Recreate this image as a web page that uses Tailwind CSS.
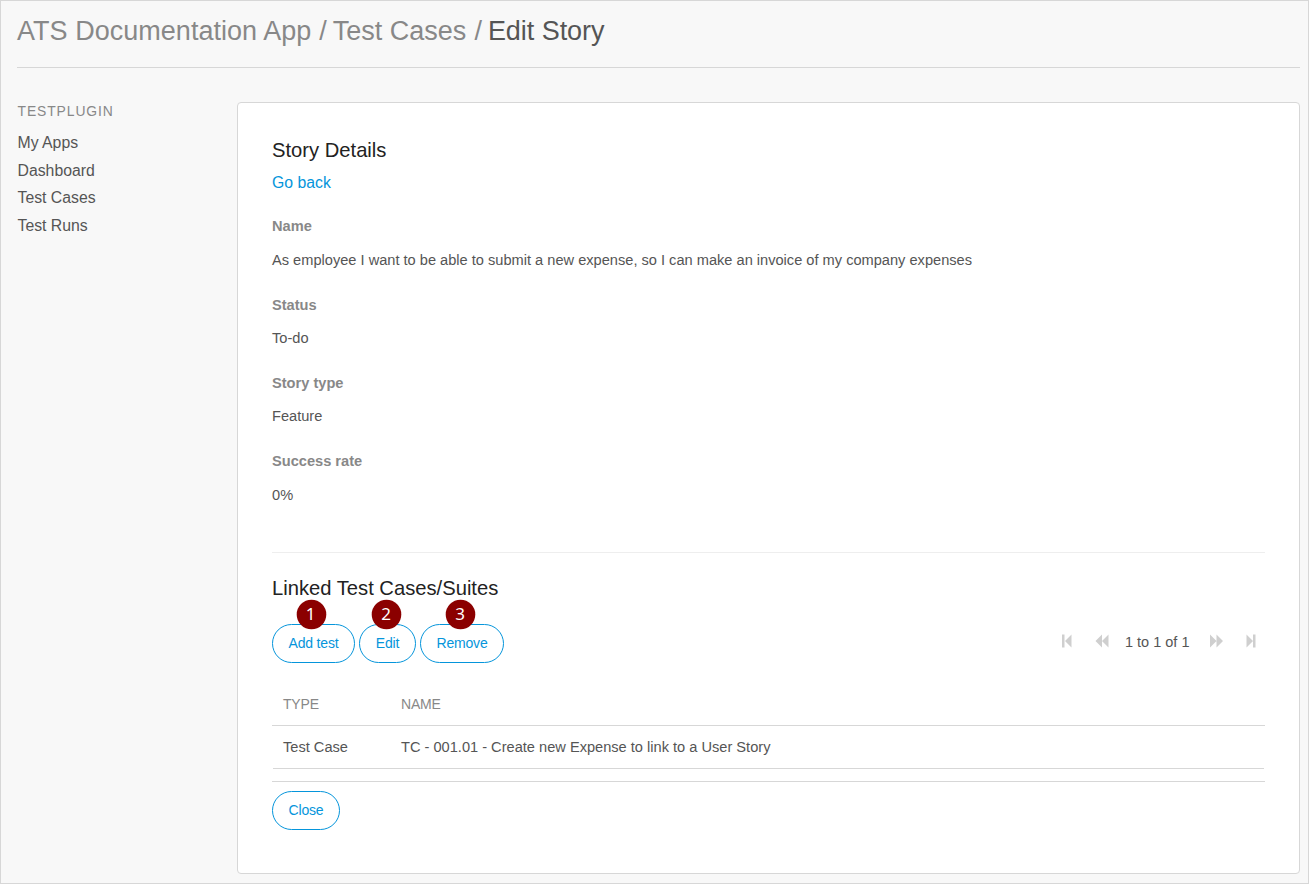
<!DOCTYPE html>
<html lang="en">
<head>
<meta charset="utf-8">
<title>Edit Story</title>
<script src="https://cdn.jsdelivr.net/npm/@tailwindcss/browser@4"></script>
</head>
<body class="w-[1309px] h-[884px] overflow-hidden border border-[#d7d7d7] bg-[#f8f8f8] font-['Liberation_Sans',Arial,sans-serif] text-[14.61px] text-[#555] whitespace-nowrap">
<header class="ml-4 mr-2 h-[67px] border-b border-[#d7d7d7] pt-[10px] flex items-start text-[27px] leading-10 text-[#888]">
  <span class="tracking-[0.03px]">ATS Documentation App</span><span class="ml-[8px]">/</span><span class="ml-[6px]">Test Cases</span><span class="ml-[8px]">/</span><span class="ml-[6px] tracking-[-0.05px] text-[#555]">Edit Story</span>
</header>
<div class="flex pt-[34px] pl-4">
  <nav class="w-[220px] pl-[0.5px] text-[15.8px] leading-[27.6px]">
    <h3 class="h-[27px] text-[13.9px] leading-[19px] tracking-[0.9px] text-[#888]">TESTPLUGIN</h3>
    <ul>
      <li>My Apps</li>
      <li>Dashboard</li>
      <li>Test Cases</li>
      <li>Test Runs</li>
    </ul>
  </nav>
  <main class="w-[1063px] h-[772px] rounded border border-[#d7d7d7] bg-white px-[34px] pt-[33px] leading-5">
    <h2 class="h-7 text-[20.2px] leading-7 text-[#222]">Story Details</h2>
    <a class="mt-[7px] block h-6 text-[15.8px] leading-6 text-[#0595db]">Go back</a>
    <div class="mt-[21px] font-bold text-[#888]">Name</div>
    <div class="mt-[14px]">As employee I want to be able to submit a new expense, so I can make an invoice of my company expenses</div>
    <div class="mt-[25px] font-bold text-[#888]">Status</div>
    <div class="mt-[13px]">To-do</div>
    <div class="mt-[25px] font-bold text-[#888]">Story type</div>
    <div class="mt-[13px]">Feature</div>
    <div class="mt-[25px] font-bold text-[#888]">Success rate</div>
    <div class="mt-[14px]">0%</div>
    <hr class="mt-[47px] border-t border-[#eee]">
    <h2 class="mt-[21px] h-7 text-[20.2px] leading-7 text-[#222]">Linked Test Cases/Suites</h2>
    <div class="mt-[22px] flex h-[39px] items-center">
      <div class="flex gap-1 text-sm tracking-[-0.2px] text-[#0595db]">
        <div class="relative flex h-[39px] w-[83px] items-center justify-center rounded-full border border-[#0595db] pb-0.5">Add test
          <svg class="absolute left-[23px] -top-[26px]" width="31" height="31"><circle cx="15.5" cy="15.5" r="14.800" fill="#8b0000"/><text x="14.500" y="20.500" text-anchor="middle" font-family="Noto Sans, sans-serif" font-size="17" fill="#fff">1</text></svg>
        </div>
        <div class="relative flex h-[39px] w-[57px] items-center justify-center rounded-full border border-[#0595db] pb-0.5">Edit
          <svg class="absolute left-[11px] -top-[26px]" width="31" height="31"><circle cx="15.5" cy="15.5" r="14.800" fill="#8b0000"/><text x="15" y="20.500" text-anchor="middle" font-family="Noto Sans, sans-serif" font-size="17" fill="#fff">2</text></svg>
        </div>
        <div class="relative flex h-[39px] w-[84px] items-center justify-center rounded-full border border-[#0595db] pb-0.5">Remove
          <svg class="absolute left-[24px] -top-[26px]" width="31" height="31"><circle cx="15.5" cy="15.5" r="14.800" fill="#8b0000"/><text x="15" y="20.500" text-anchor="middle" font-family="Noto Sans, sans-serif" font-size="17" fill="#fff">3</text></svg>
        </div>
      </div>
      <div class="ml-auto mr-2 flex w-[195px] items-center fill-[#cfcfcf] pb-1.5">
        <svg width="10" height="14"><path d="M0 0.500h2.500v13H0zM9.500 0.500v13L3 7z"/></svg>
        <svg class="ml-[23px]" width="14" height="14"><path d="M7 0.500v13L0.500 7zM13.500 0.500v13L7 7z"/></svg>
        <span class="ml-4 w-[65px] translate-y-px text-[14.5px]">1 to 1 of 1</span>
        <svg class="ml-[19px]" width="14" height="14"><path d="M1 0.500v13L7.500 7zM7.500 0.500v13L14 7z"/></svg>
        <svg class="ml-[23px]" width="10" height="14"><path d="M7 0.500h2.500v13h-2.500zM0.500 0.500v13L7 7z"/></svg>
      </div>
    </div>
    <div class="mt-[21px] grid h-[42px] grid-cols-[118px_1fr] items-center border-b border-[#d7d7d7] px-[11px] pb-0.5 text-sm tracking-[-0.2px] text-[#888]"><span>TYPE</span><span>NAME</span></div>
    <div class="mx-px grid h-[43px] grid-cols-[118px_1fr] items-center border-b border-[#d7d7d7] px-[10px]"><span>Test Case</span><span>TC - 001.01 - Create new Expense to link to a User Story</span></div>
    <hr class="mt-3 border-t border-[#d7d7d7]">
    <div class="mt-[9px] flex h-[39px] w-[68px] items-center justify-center rounded-full border border-[#0595db] pb-0.5 text-sm tracking-[-0.2px] text-[#0595db]">Close</div>
  </main>
</div>
</body>
</html>
